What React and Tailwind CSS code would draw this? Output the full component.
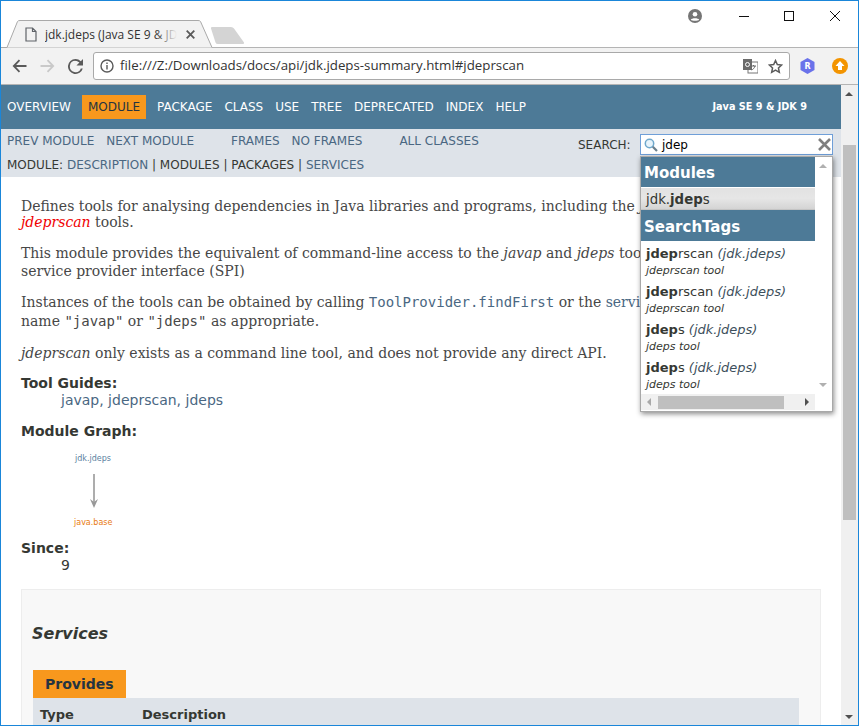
const sans = 'font-["DejaVu_Sans",sans-serif]';

const navItems = ['PACKAGE', 'CLASS', 'USE', 'TREE', 'DEPRECATED', 'INDEX', 'HELP'];

const searchRows = [
  { bold: 'jdep', rest: 'rscan', sub: 'jdeprscan tool' },
  { bold: 'jdep', rest: 'rscan', sub: 'jdeprscan tool' },
  { bold: 'jdep', rest: 's', sub: 'jdeps tool' },
  { bold: 'jdep', rest: 's', sub: 'jdeps tool' },
];

const TabStrip = () => (
  <div className="relative h-[46px] bg-white shrink-0">
    {/* tab outline */}
    <svg className="absolute left-0 top-0" width="250" height="47" viewBox="0 0 250 47">
      <path d="M0 46.5 H7 L17.5 20.5 Q18 19.5 20 19.5 H198 Q200 19.5 200.5 20.5 L212 46.5" fill="#f2f2f2" stroke="#a9a9a9" />
      <path d="M211 27.5 Q210.5 26 212 26 H231 Q233 26 234 27.5 L244 41.5 Q244.5 43 242 43 H218 Q216 43 215.5 41.5 Z" fill="#d4d4d4" />
    </svg>
    <svg className="absolute left-[25px] top-[26px]" width="12" height="15" viewBox="0 0 12 15" fill="none" stroke="#5f6368" strokeWidth="1.2">
      <path d="M1 1 H7.5 L11 4.5 V14 H1 Z M7.5 1 V4.5 H11" />
    </svg>
    <div className="absolute left-[45px] top-[25px] w-[132px] overflow-hidden whitespace-nowrap font-['Open_Sans',sans-serif] text-[12px] leading-[17px] text-[#333]">
      jdk.jdeps (Java SE 9 &amp; JDK 9 )
      <div className="absolute right-0 top-0 h-full w-[22px] bg-gradient-to-r from-transparent to-[#f2f2f2]" />
    </div>
    <svg className="absolute left-[186px] top-[29px]" width="9" height="9" viewBox="0 0 9 9" stroke="#5a5a5a" strokeWidth="1.8">
      <path d="M0.7 0.7 L8.3 8.3 M8.3 0.7 L0.7 8.3" />
    </svg>
    {/* window controls */}
    <svg className="absolute left-[688px] top-[8px]" width="14" height="14" viewBox="0 0 14 14">
      <circle cx="7" cy="7" r="7" fill="#757575" />
      <circle cx="7" cy="5.2" r="2.3" fill="#fff" />
      <path d="M2.8 10.8 C3.6 8.8 10.4 8.8 11.2 10.8 C10 12.2 4 12.2 2.8 10.8 Z" fill="#fff" />
    </svg>
    <svg className="absolute left-[738px] top-[9px]" width="104" height="12" viewBox="0 0 104 12" fill="none" stroke="#111" strokeWidth="1">
      <path d="M1 6.5 H11" />
      <rect x="46.5" y="1.5" width="9" height="9" />
      <path d="M92 1 L102 11 M102 1 L92 11" />
    </svg>
  </div>
);

const Toolbar = () => (
  <div className="h-[38px] shrink-0 bg-[#f2f2f2] border-t border-b border-[#b4b4b4] flex items-center">
    <svg className="ml-[12px] shrink-0" width="15" height="14" viewBox="0 0 15 14" fill="none" stroke="#5a5a5a" strokeWidth="1.8">
      <path d="M14.5 7 H2 M7.5 1.2 L1.8 7 L7.5 12.8" />
    </svg>
    <svg className="ml-[13px] shrink-0" width="15" height="14" viewBox="0 0 15 14" fill="none" stroke="#c9c9c9" strokeWidth="1.8">
      <path d="M0.5 7 H13 M7.5 1.2 L13.2 7 L7.5 12.8" />
    </svg>
    <svg className="ml-[13px] shrink-0" width="15" height="15" viewBox="4 4 16 16" fill="#5a5a5a">
      <path d="M17.65 6.35A7.95 7.95 0 0 0 12 4a8 8 0 1 0 7.73 10h-2.08A6 6 0 1 1 12 6c1.66 0 3.14.69 4.22 1.78L13 11h7V4l-2.35 2.35z" />
    </svg>
    <div className="ml-[10px] w-[697px] h-[28px] rounded-[3px] bg-white border border-[#a9a9a9] flex items-center shrink-0">
      <svg className="ml-[6px] shrink-0" width="14" height="14" viewBox="0 0 14 14" fill="none" stroke="#5a5a5a" strokeWidth="1.4">
        <circle cx="7" cy="7" r="6" />
        <path d="M7 6 V10.5 M7 3.4 V5" />
      </svg>
      <span className="ml-[6px] font-['Open_Sans',sans-serif] text-[13.3px] text-[#333] whitespace-nowrap">
        file:///Z:/Downloads/docs/api/jdk.jdeps-summary.html#jdeprscan
      </span>
      <svg className="ml-auto shrink-0" width="15" height="15" viewBox="0 0 15 15">
        <rect x="5" y="3" width="10" height="11" fill="#fff" stroke="#777" />
        <rect x="0" y="0" width="9" height="11" fill="#6b6b6b" />
        <circle cx="4.5" cy="5.5" r="2" fill="none" stroke="#fff" />
        <path d="M8 7 H13 M10.5 6 V7 M12 7 C11.5 9 10 10.5 8.5 11" fill="none" stroke="#666" />
      </svg>
      <svg className="ml-[10px] mr-[6px] shrink-0" width="15" height="15" viewBox="0 0 24 24" fill="none" stroke="#5a5a5a" strokeWidth="2.4">
        <path d="M12 2.5 L14.9 8.9 L21.8 9.7 L16.7 14.4 L18.1 21.3 L12 17.8 L5.9 21.3 L7.3 14.4 L2.2 9.7 L9.1 8.9 Z" />
      </svg>
    </div>
    <svg className="ml-[10px] shrink-0" width="15" height="16" viewBox="0 0 15 16">
      <path d="M7.5 0 L14.5 4 V12 L7.5 16 L0.5 12 V4 Z" fill="#6a72ea" />
      <text x="7.5" y="11" textAnchor="middle" fontSize="8" fontWeight="bold" fill="#fff" fontFamily="DejaVu Sans">R</text>
    </svg>
    <svg className="ml-[17px] shrink-0" width="16" height="16" viewBox="0 0 16 16">
      <circle cx="8" cy="8" r="8" fill="#f39400" />
      <path d="M8 3 L12.5 8 H10 V12 H6 V8 H3.5 Z" fill="#fff" />
    </svg>
  </div>
);

const SearchPopup = () => (
  <div className={`absolute left-[640px] top-[156px] w-[193px] h-[256px] bg-white border border-[#a8a8a8] shadow-[1px_2px_5px_rgba(0,0,0,0.45)] ${sans}`}>
    <div className="h-[30px] w-[174px] bg-[#4D7A97] text-white font-bold text-[15px] leading-[32px] pl-[3px]">Modules</div>
    <div className="mt-px h-[22px] w-[174px] bg-gradient-to-b from-[#e2e2e2] via-[#e6e6e6] to-[#d4d4d4] border-b border-[#c4c4c4] text-[13.3px] leading-[23px] pl-[5px] text-[#353833]">
      jdk.<b>jdep</b>s
    </div>
    <div className="h-[31px] w-[174px] bg-[#4D7A97] text-white font-bold text-[15px] leading-[35px] pl-[3px]">SearchTags</div>
    <div className="w-[174px] pl-[5px] pt-[3px]">
      {searchRows.map((row, i) => (
        <div key={i} className="h-[38px] text-[#353833] whitespace-nowrap">
          <div className="text-[13px] leading-[19px]">
            <b>{row.bold}</b>{row.rest} <i className="text-[#3d4f5c]">(jdk.jdeps)</i>
          </div>
          <div className="text-[11px] leading-[16px] italic">{row.sub}</div>
        </div>
      ))}
    </div>
    {/* vertical scrollbar */}
    <div className="absolute right-0 top-0 w-[17px] h-[237px] bg-white">
      <div className="absolute left-[4px] top-[7px] w-0 h-0 border-x-[4px] border-x-transparent border-b-[4px] border-b-[#b0b0b0]" />
      <div className="absolute left-[4px] bottom-[7px] w-0 h-0 border-x-[4px] border-x-transparent border-t-[4px] border-t-[#b0b0b0]" />
    </div>
    {/* horizontal scrollbar */}
    <div className="absolute left-0 top-[237px] w-[174px] h-[16px] bg-[#f0f0f0]">
      <div className="absolute left-[6px] top-[4px] w-0 h-0 border-y-[4px] border-y-transparent border-r-[4px] border-r-[#a8a8a8]" />
      <div className="absolute left-[17px] top-[2px] w-[126px] h-[13px] bg-[#bfbfbf]" />
      <div className="absolute left-[164px] top-[4px] w-0 h-0 border-y-[4px] border-y-transparent border-l-[4px] border-l-[#505050]" />
    </div>
  </div>
);

const Page = () => (
  <div className="flex-1 min-w-0 overflow-hidden">
    <div className={`h-[44px] bg-[#4D7A97] flex items-center text-[12px] text-white pl-[7px] pr-[34px] ${sans}`}>
      <span>OVERVIEW</span>
      <span className="ml-[11px] mr-[11px] h-[24px] px-[6px] bg-[#F8981D] text-[#253441] leading-[24px]">MODULE</span>
      {navItems.map((item) => (
        <span key={item} className="mr-[12px]">{item}</span>
      ))}
      <span className="ml-auto text-[9.7px] font-bold">Java SE 9 &amp; JDK 9</span>
    </div>
    <div className={`h-[48px] bg-[#dee3e9] relative text-[12px] leading-[16px] text-[#4A6782] pl-[7px] pt-[4px] whitespace-nowrap ${sans}`}>
      <div className="flex">
        <span>PREV MODULE</span>
        <span className="ml-[12px]">NEXT MODULE</span>
        <span className="ml-[37px]">FRAMES</span>
        <span className="ml-[12px]">NO FRAMES</span>
        <span className="ml-[37px]">ALL CLASSES</span>
      </div>
      <div className="mt-[8px] text-[#353833]">
        MODULE: <span className="text-[#4A6782]">DESCRIPTION</span> | MODULES | PACKAGES | <span className="text-[#4A6782]">SERVICES</span>
      </div>
      <div className="absolute left-[578px] top-[8px] text-[#353833]">SEARCH:</div>
      <div className="absolute left-[640px] top-[5px] w-[193px] h-[21px] bg-white border border-[#6f9fd8] flex items-center">
        <svg className="ml-[3px] shrink-0" width="14" height="14" viewBox="0 0 14 14" fill="none">
          <circle cx="5.5" cy="5.5" r="4.2" stroke="#6fa8cc" strokeWidth="1.5" fill="#e8f4fb" />
          <path d="M8.8 8.8 L13 13" stroke="#6a7f8c" strokeWidth="2.2" />
        </svg>
        <span className="ml-[4px] text-[12px] text-black">jdep</span>
        <svg className="ml-auto mr-[1px] shrink-0" width="13" height="13" viewBox="0 0 13 13" stroke="#7f7f7f" strokeWidth="2.6">
          <path d="M1 1 L12 12 M12 1 L1 12" />
        </svg>
      </div>
    </div>
    <div className="pl-[21px] pr-[20px] text-[#353833] whitespace-nowrap">
      <div className="font-['DejaVu_Serif',serif] text-[14px] text-[#474747]">
        <p className="pt-[21px] leading-[16px]">
          Defines tools for analysing dependencies in Java libraries and programs, including the <i>jdeps</i> and<br />
          <i className="text-[#f00000]">jdeprscan</i> tools.
        </p>
        <p className="mt-[14px] leading-[18px]">
          This module provides the equivalent of command-line access to the <i>javap</i> and <i>jdeps</i> tools via the<br />
          service provider interface (SPI)
        </p>
        <p className="mt-[13px] leading-[19px]">
          Instances of the tools can be obtained by calling <span className="font-['DejaVu_Sans_Mono',monospace] text-[#4A6782]">ToolProvider.findFirst</span> or the <span className="text-[#4A6782]">service loader</span> with the<br />
          name <span className="font-['DejaVu_Sans_Mono',monospace]">"javap"</span> or <span className="font-['DejaVu_Sans_Mono',monospace]">"jdeps"</span> as appropriate.
        </p>
        <p className="mt-[14px] leading-[17px]"><i>jdeprscan</i> only exists as a command line tool, and does not provide any direct API.</p>
      </div>
      <div className={`mt-[13px] text-[14px] leading-[17px] ${sans}`}>
        <div className="font-bold">Tool Guides:</div>
        <div className="pl-[40px] text-[#4A6782]">javap, jdeprscan, jdeps</div>
        <div className="mt-[14px] font-bold">Module Graph:</div>
        <div className="relative h-[100px]">
          <span className="absolute left-[54px] top-[10px] text-[8px] text-[#5a7fa0]">jdk.jdeps</span>
          <svg className="absolute left-[68px] top-[34px]" width="10" height="36" viewBox="0 0 10 36">
            <path d="M5 0 V30" stroke="#999" strokeWidth="1.6" />
            <path d="M1 25 L5 34 L9 25 L5 28 Z" fill="#999" />
          </svg>
          <span className="absolute left-[53px] top-[74px] text-[8px] text-[#e87a10]">java.base</span>
        </div>
        <div className="font-bold">Since:</div>
        <div className="pl-[40px]">9</div>
      </div>
      <div className="mt-[15px] h-[200px] bg-[#f8f8f8] border border-[#ededed] px-[11px] pt-[34px]">
        <div className={`-ml-px text-[16px] leading-[19px] font-bold italic ${sans}`}>Services</div>
        <div className={`mt-[27px] w-[93px] h-[28px] bg-[#F8981D] text-[#253441] text-[14px] font-bold leading-[28px] pl-[12px] ${sans}`}>Provides</div>
        <div className={`h-[40px] bg-[#dee3e9] w-[766px] flex text-[13px] font-bold pt-[7px] text-[#353833] ${sans}`}>
          <span className="pl-[7px] w-[109px]">Type</span>
          <span>Description</span>
        </div>
      </div>
    </div>
  </div>
);

const Scrollbar = () => (
  <div className="relative w-[18px] shrink-0 bg-[#f0f0f0]">
    <div className="absolute left-[4px] top-[7px] w-0 h-0 border-x-[4px] border-x-transparent border-b-[4px] border-b-[#505050]" />
    <div className="absolute left-[2px] top-[60px] w-[13px] h-[375px] bg-[#bfbfbf]" />
    <div className="absolute left-[4px] bottom-[7px] w-0 h-0 border-x-[4px] border-x-transparent border-t-[4px] border-t-[#505050]" />
  </div>
);

export default function App() {
  return (
    <div className="relative w-[859px] h-[726px] overflow-hidden bg-white pt-px flex flex-col">
      <TabStrip />
      <Toolbar />
      <div className="flex flex-1 min-h-0">
        <Page />
        <Scrollbar />
      </div>
      <SearchPopup />
      {/* window frame */}
      <div className="absolute inset-0 border border-[#1a86d9] pointer-events-none" />
    </div>
  );
}
